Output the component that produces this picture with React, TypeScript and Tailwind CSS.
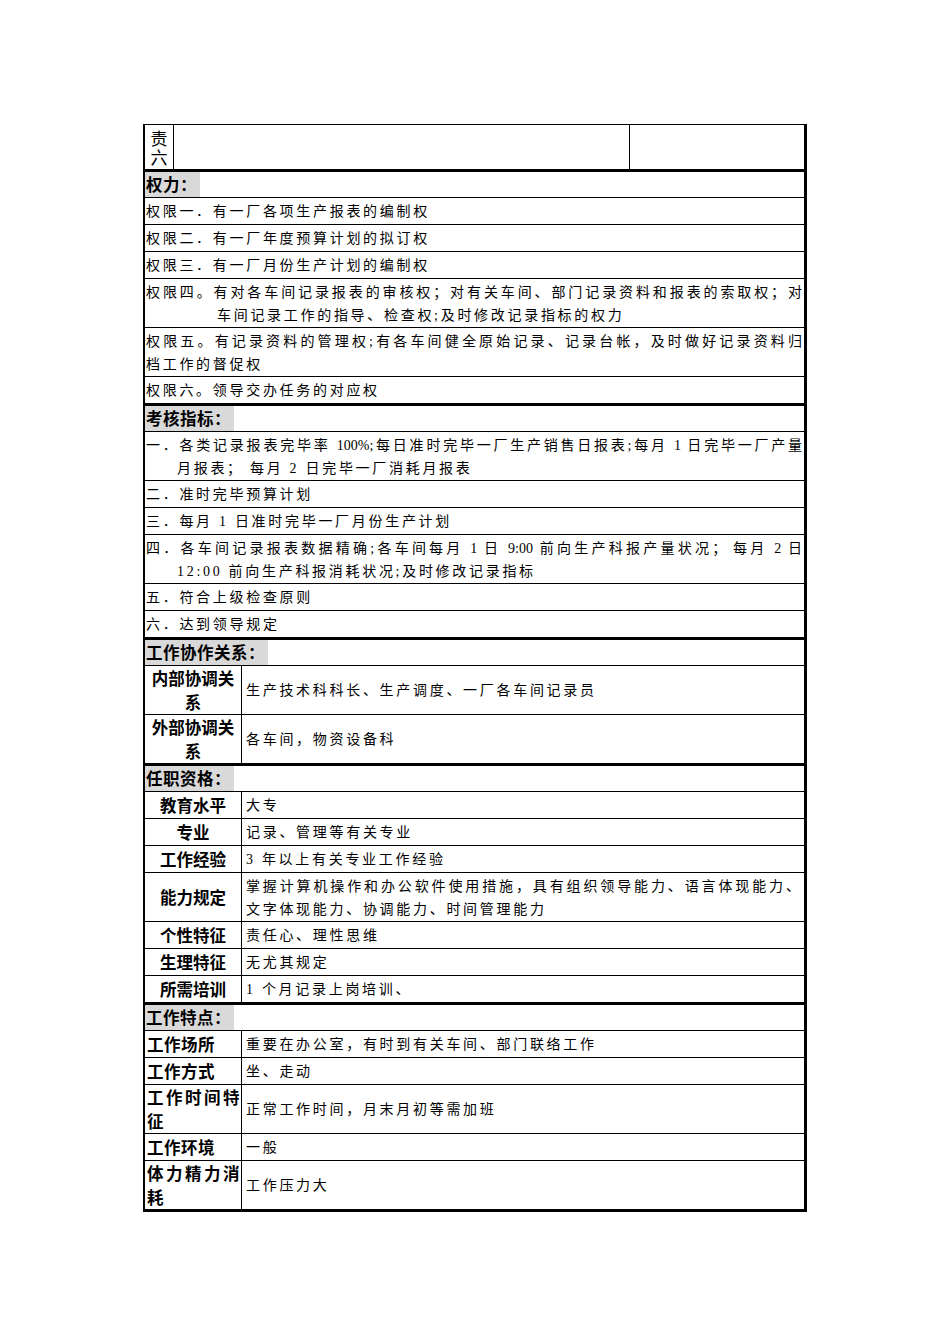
import React from "react";

const body =
  "font-['Liberation_Serif','Noto_Sans_CJK_SC',serif] text-[14px] tracking-[2.7px] text-black";
const bold =
  "font-['Liberation_Sans','Noto_Sans_CJK_SC',sans-serif] font-bold text-[16.5px] text-black";
const just = "text-justify [text-align-last:justify] tracking-normal";

function Header({ title }: { title: string }) {
  return (
    <div className="flex h-[28px] border-t-[3px] border-black">
      <span className={`${bold} flex items-center bg-[#d9d9d9] pr-[3px] pl-[1px] pt-[1px] tracking-[0.5px]`}>
        {title}
      </span>
    </div>
  );
}

function Line({
  h = 27,
  children,
}: {
  h?: number;
  children: React.ReactNode;
}) {
  return (
    <div
      className={`${body} flex flex-col justify-center border-t border-black pl-[1px] pr-[2px] pt-[1px] leading-[23px] ${
        h === 27 ? "h-[27px]" : "h-[49px]"
      }`}
    >
      {children}
    </div>
  );
}

function Field({
  label,
  align = "center",
  h = 27,
  children,
}: {
  label: React.ReactNode;
  align?: "center" | "left";
  h?: number;
  children: React.ReactNode;
}) {
  return (
    <div
      className={`flex border-t border-black ${
        h === 27 ? "h-[27px]" : "h-[49px]"
      }`}
    >
      <div
        className={`${bold} flex w-[97px] flex-col justify-center border-r border-black pt-[1px] leading-[24px] ${
          align === "center" ? "items-center text-center" : "pl-[2px] tracking-[0.5px]"
        }`}
      >
        {label}
      </div>
      <div
        className={`${body} flex flex-1 flex-col justify-center pl-[4px] pr-[4px] pt-[1px] leading-[23px]`}
      >
        {children}
      </div>
    </div>
  );
}

export default function App() {
  return (
    <div className="min-h-[1344px] w-[950px] bg-white pt-[124px]">
      <div className="ml-[143px] w-[664px] border-t border-b-[3px] border-l-2 border-r-[3px] border-black">
        {/* 职责六 */}
        <div className="flex h-[44px]">
          <div className="flex w-[29px] flex-col items-center justify-center border-r border-black pt-[3px] font-['Liberation_Sans','Noto_Sans_CJK_SC',sans-serif] text-[17px] leading-[19px]">
            <span>责</span>
            <span>六</span>
          </div>
          <div className="flex-1 border-r border-black" />
          <div className="w-[174px]" />
        </div>

        <Header title="权力：" />
        <Line>权限一．有一厂各项生产报表的编制权</Line>
        <Line>权限二．有一厂年度预算计划的拟订权</Line>
        <Line>权限三．有一厂月份生产计划的编制权</Line>
        <Line h={49}>
          <div className={just}>
            权限四。有对各车间记录报表的审核权；对有关车间、部门记录资料和报表的索取权；对
          </div>
          <div className="pl-[71px]">车间记录工作的指导、检查权;及时修改记录指标的权力</div>
        </Line>
        <Line h={49}>
          <div className={just}>
            权限五。有记录资料的管理权;有各车间健全原始记录、记录台帐，及时做好记录资料归
          </div>
          <div>档工作的督促权</div>
        </Line>
        <Line>权限六。领导交办任务的对应权</Line>

        <Header title="考核指标：" />
        <Line h={49}>
          <div className={just}>
            一．各类记录报表完毕率 100%;每日准时完毕一厂生产销售日报表;每月 1 日完毕一厂产量
          </div>
          <div className="pl-[31px]">月报表； 每月 2 日完毕一厂消耗月报表</div>
        </Line>
        <Line>二．准时完毕预算计划</Line>
        <Line>三．每月 1 日准时完毕一厂月份生产计划</Line>
        <Line h={49}>
          <div className={just}>
            四．各车间记录报表数据精确;各车间每月 1 日 9:00 前向生产科报产量状况； 每月 2 日
          </div>
          <div className="pl-[31px]">12:00 前向生产科报消耗状况;及时修改记录指标</div>
        </Line>
        <Line>五．符合上级检查原则</Line>
        <Line>六．达到领导规定</Line>

        <Header title="工作协作关系：" />
        <Field
          h={49}
          label={
            <>
              <span>内部协调关</span>
              <span>系</span>
            </>
          }
        >
          生产技术科科长、生产调度、一厂各车间记录员
        </Field>
        <Field
          h={49}
          label={
            <>
              <span>外部协调关</span>
              <span>系</span>
            </>
          }
        >
          各车间，物资设备科
        </Field>

        <Header title="任职资格：" />
        <Field label="教育水平">大专</Field>
        <Field label="专业">记录、管理等有关专业</Field>
        <Field label="工作经验">3 年以上有关专业工作经验</Field>
        <Field h={49} label="能力规定">
          <div className={just}>
            掌握计算机操作和办公软件使用措施，具有组织领导能力、语言体现能力、
          </div>
          <div>文字体现能力、协调能力、时间管理能力</div>
        </Field>
        <Field label="个性特征">责任心、理性思维</Field>
        <Field label="生理特征">无尤其规定</Field>
        <Field label="所需培训">1 个月记录上岗培训、</Field>

        <Header title="工作特点：" />
        <Field align="left" label="工作场所">
          重要在办公室，有时到有关车间、部门联络工作
        </Field>
        <Field align="left" label="工作方式">
          坐、走动
        </Field>
        <Field
          align="left"
          h={49}
          label={
            <>
              <div className="text-justify [text-align-last:justify] pr-[1px]">工作时间特</div>
              <div>征</div>
            </>
          }
        >
          正常工作时间，月末月初等需加班
        </Field>
        <Field align="left" label="工作环境">
          一般
        </Field>
        <Field
          align="left"
          h={49}
          label={
            <>
              <div className="text-justify [text-align-last:justify] pr-[1px]">体力精力消</div>
              <div>耗</div>
            </>
          }
        >
          工作压力大
        </Field>
      </div>
    </div>
  );
}
